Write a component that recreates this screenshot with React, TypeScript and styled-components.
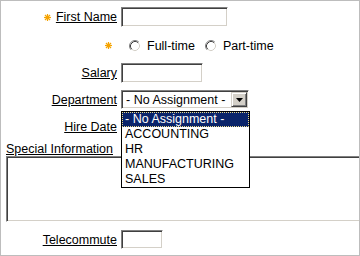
import React from "react";
import styled, { createGlobalStyle } from "styled-components";

const Global = createGlobalStyle`
  html, body { margin: 0; padding: 0; background: #fff; }
  body { font-family: "Liberation Sans", Arial, sans-serif; font-size: 12.5px; color: #000; }
`;

const Frame = styled.div`
  position: relative;
  box-sizing: border-box;
  width: 360px;
  height: 256px;
  border: 1px solid #bdbdbd;
  overflow: hidden;
  padding-top: 6px;
  display: flex;
  flex-direction: column;
  background: #fff;
`;

const Row = styled.div<{ $top: number; $h: number }>`
  display: grid;
  grid-template-columns: 116px auto;
  column-gap: 4px;
  align-items: center;
  height: ${(p) => p.$h}px;
  margin-top: ${(p) => p.$top}px;
`;

const LabelCell = styled.div<{ $pad?: number }>`
  display: flex;
  align-items: center;
  justify-content: flex-end;
  padding-right: ${(p) => p.$pad ?? 0}px;
  line-height: 14px;
`;

const Label = styled.span`
  text-decoration: underline;
  text-underline-offset: 1px;
  white-space: nowrap;
`;

const Star = styled.svg<{ $gap: number }>`
  width: 7px;
  height: 7px;
  margin-right: ${(p) => p.$gap}px;
  flex: none;
`;

const inset = `
  box-sizing: border-box;
  border-style: solid;
  border-width: 1px;
  border-color: #808080 #ffffff #ffffff #808080;
  box-shadow: inset 1px 1px 0 #404040, inset -1px -1px 0 #d4d0c8;
  background: #fff;
`;

const TextBox = styled.div<{ $w: number; $h?: number }>`
  ${inset}
  width: ${(p) => p.$w}px;
  height: ${(p) => p.$h ?? 20}px;
`;

const RadioGroup = styled.div`
  display: flex;
  align-items: center;
  padding-left: 8px;
  padding-top: 2px;
  line-height: 14px;
`;

const RadioOption = styled.label<{ $gapAfter: number }>`
  display: flex;
  align-items: center;
  gap: 6px;
  margin-right: ${(p) => p.$gapAfter}px;
`;

const SelectWrap = styled.div`
  position: relative;
  width: 128px;
  height: 19px;
`;

const SelectBox = styled.div`
  ${inset}
  width: 128px;
  height: 19px;
  display: flex;
  align-items: center;
  padding: 2px 1px 2px 4px;
  line-height: 14px;
`;

const SelectText = styled.span`
  flex: 1;
  white-space: nowrap;
`;

const ArrowBtn = styled.div`
  box-sizing: border-box;
  width: 16px;
  height: 15px;
  background: #d4d0c8;
  border-style: solid;
  border-width: 1px;
  border-color: #d4d0c8 #404040 #404040 #d4d0c8;
  box-shadow: inset 1px 1px 0 #fff, inset -1px -1px 0 #808080;
  display: flex;
  align-items: center;
  justify-content: center;
`;

const DropList = styled.ul`
  position: absolute;
  left: 0;
  top: 21px;
  z-index: 5;
  box-sizing: border-box;
  width: 129px;
  margin: 0;
  padding: 0;
  list-style: none;
  background: #fff;
  border: 1px solid #000;
`;

const Option = styled.li<{ $active?: boolean }>`
  box-sizing: border-box;
  height: 15px;
  line-height: 13px;
  padding-left: 2px;
  white-space: nowrap;
  border: 1px ${(p) => (p.$active ? "dotted #e9d98a" : "solid transparent")};
  background: ${(p) => (p.$active ? "#0a246a" : "#fff")};
  color: ${(p) => (p.$active ? "#fff" : "#000")};
`;

const Section = styled.div`
  margin-top: 5px;
  display: flex;
  flex-direction: column;
`;

const SectionLabel = styled.div`
  padding-left: 5px;
  line-height: 14px;
  height: 14px;
`;

const TextArea = styled.div`
  ${inset}
  margin-left: 5px;
  width: 400px;
  height: 66px;
  flex: none;
`;

const StarIcon = ({ gap }: { gap: number }) => (
  <Star $gap={gap} viewBox="0 0 7 7">
    <g stroke="#f5a300" strokeWidth="1.2" strokeLinecap="butt">
      <line x1="3.5" y1="0" x2="3.5" y2="7" />
      <line x1="0" y1="3.5" x2="7" y2="3.5" />
      <line x1="1" y1="1" x2="6" y2="6" />
      <line x1="6" y1="1" x2="1" y2="6" />
    </g>
  </Star>
);

const Radio = () => (
  <svg width="12" height="12" viewBox="0 0 12 12">
    <circle cx="6" cy="6" r="5" fill="#fff" />
    <path d="M2.11 9.89 A5.5 5.5 0 0 1 9.89 2.11" fill="none" stroke="#808080" />
    <path d="M9.89 2.11 A5.5 5.5 0 0 1 2.11 9.89" fill="none" stroke="#ffffff" />
    <path d="M2.82 9.18 A4.5 4.5 0 0 1 9.18 2.82" fill="none" stroke="#404040" />
    <path d="M9.18 2.82 A4.5 4.5 0 0 1 2.82 9.18" fill="none" stroke="#d4d0c8" />
  </svg>
);

export default function App() {
  return (
    <>
      <Global />
      <Frame>
        <Row $top={0} $h={20}>
          <LabelCell>
            <StarIcon gap={5} />
            <Label>First Name</Label>
          </LabelCell>
          <TextBox $w={107} />
        </Row>
        <Row $top={8} $h={20}>
          <LabelCell $pad={5}>
            <StarIcon gap={0} />
          </LabelCell>
          <RadioGroup>
            <RadioOption $gapAfter={10}>
              <Radio />
              <span>Full-time</span>
            </RadioOption>
            <RadioOption $gapAfter={0}>
              <Radio />
              <span>Part-time</span>
            </RadioOption>
          </RadioGroup>
        </Row>
        <Row $top={8} $h={20}>
          <LabelCell>
            <Label>Salary</Label>
          </LabelCell>
          <TextBox $w={82} />
        </Row>
        <Row $top={7} $h={19}>
          <LabelCell>
            <Label>Department</Label>
          </LabelCell>
          <SelectWrap>
            <SelectBox>
              <SelectText>- No Assignment -</SelectText>
              <ArrowBtn>
                <svg width="7" height="4" viewBox="0 0 7 4">
                  <path d="M0 0 H7 L3.5 4 Z" fill="#000" />
                </svg>
              </ArrowBtn>
            </SelectBox>
            <DropList>
              <Option $active>- No Assignment -</Option>
              <Option>ACCOUNTING</Option>
              <Option>HR</Option>
              <Option>MANUFACTURING</Option>
              <Option>SALES</Option>
            </DropList>
          </SelectWrap>
        </Row>
        <Row $top={8} $h={20}>
          <LabelCell>
            <Label>Hire Date</Label>
          </LabelCell>
          <TextBox $w={82} />
        </Row>
        <Section>
          <SectionLabel>
            <Label>Special Information</Label>
          </SectionLabel>
          <TextArea />
        </Section>
        <Row $top={8} $h={19}>
          <LabelCell>
            <Label>Telecommute</Label>
          </LabelCell>
          <TextBox $w={42} $h={19} />
        </Row>
      </Frame>
    </>
  );
}
